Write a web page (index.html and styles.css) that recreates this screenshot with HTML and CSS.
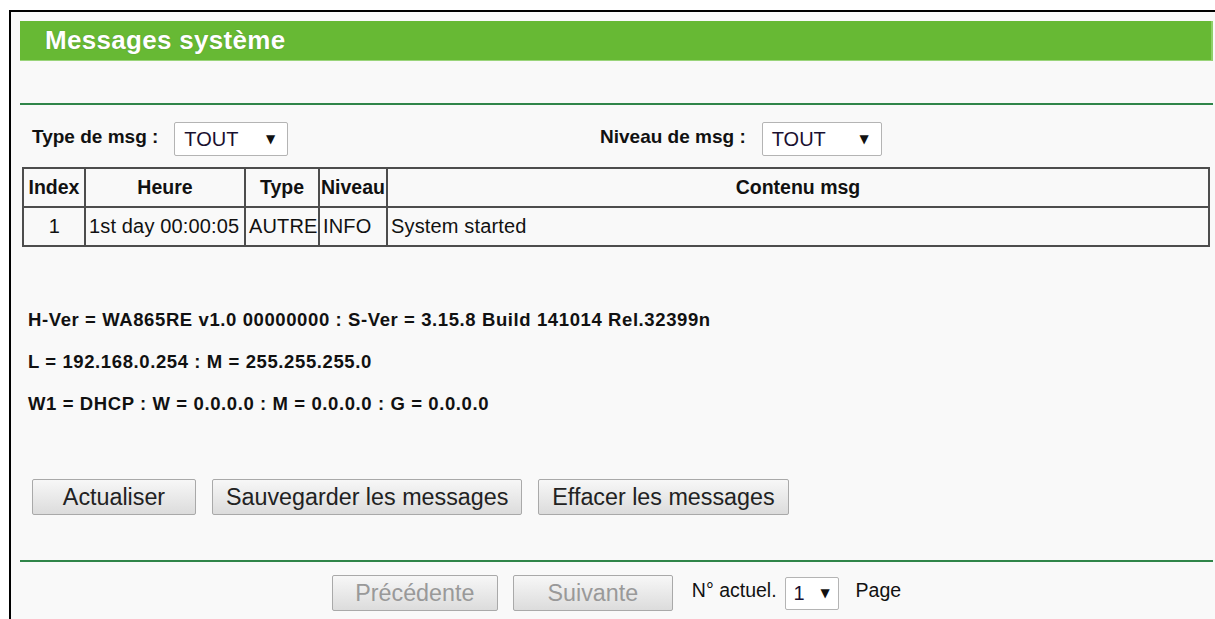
FILE: index.html
```html
<!DOCTYPE html>
<html lang="fr">
<head>
<meta charset="utf-8">
<title>Messages système</title>
<link rel="stylesheet" href="styles.css">
</head>
<body>
<div class="frame">
  <div class="title-bar">Messages système</div>
  <div class="rule rule-top"></div>

  <div class="filters">
    <div class="filter">
      <span class="filter-label">Type de msg :</span>
      <div class="select select-type"><span>TOUT</span><span class="arrow">▼</span></div>
    </div>
    <div class="filter">
      <span class="filter-label">Niveau de msg :</span>
      <div class="select select-level"><span>TOUT</span><span class="arrow">▼</span></div>
    </div>
  </div>

  <table class="log">
    <colgroup>
      <col class="c-index"><col class="c-time"><col class="c-type"><col class="c-level"><col>
    </colgroup>
    <thead>
      <tr><th>Index</th><th>Heure</th><th>Type</th><th>Niveau</th><th>Contenu msg</th></tr>
    </thead>
    <tbody>
      <tr><td class="center">1</td><td>1st day 00:00:05</td><td>AUTRE</td><td>INFO</td><td>System started</td></tr>
    </tbody>
  </table>

  <div class="info">
    <p>H-Ver = WA865RE v1.0 00000000 : S-Ver = 3.15.8 Build 141014 Rel.32399n</p>
    <p>L = 192.168.0.254 : M = 255.255.255.0</p>
    <p>W1 = DHCP : W = 0.0.0.0 : M = 0.0.0.0 : G = 0.0.0.0</p>
  </div>

  <div class="actions">
    <button class="btn btn-refresh">Actualiser</button>
    <button class="btn">Sauvegarder les messages</button>
    <button class="btn">Effacer les messages</button>
  </div>

  <div class="rule rule-bottom"></div>

  <div class="pager">
    <button class="btn btn-prev" disabled>Précédente</button>
    <button class="btn btn-next" disabled>Suivante</button>
    <span class="pager-label">N° actuel.</span>
    <div class="select select-page"><span>1</span><span class="arrow">▼</span></div>
    <span class="pager-label">Page</span>
  </div>
</div>
</body>
</html>
```

FILE: styles.css
```css
html, body {
  margin: 0;
  padding: 0;
  background: #ffffff;
}

body {
  font-family: "Liberation Sans", Arial, sans-serif;
  color: #111;
  height: 619px;
  overflow: hidden;
}

.frame {
  margin: 10px 0 0 9px;
  border-top: 2px solid #000;
  border-left: 2px solid #000;
  background: #f9f9f9;
  padding: 9px 2px 0 9px;
  height: 620px;
}

/* page heading */
.title-bar {
  height: 40px;
  background: #67b934;
  border-right: 2px solid #8fd06a;
  border-bottom: 1px solid #9ad47a;
  box-sizing: border-box;
  padding-left: 25px;
  color: #fff;
  font-weight: bold;
  font-size: 26px;
  letter-spacing: 0.3px;
  line-height: 38px;
  text-shadow: 0 0 1px rgba(60, 90, 30, 0.5);
}

.rule {
  height: 2px;
  background: #2f8549;
}

.rule-top {
  margin-top: 42px;
}

/* message filters */
.filters {
  display: grid;
  grid-template-columns: 568px 1fr;
  padding-left: 12px;
  margin-top: 17px;
  height: 34px;
}

.filter {
  display: flex;
  align-items: center;
  gap: 16px;
}

.filter-label {
  font-weight: bold;
  font-size: 19px;
  margin-top: -4px;
}

.select {
  box-sizing: border-box;
  height: 34px;
  display: inline-flex;
  align-items: center;
  justify-content: space-between;
  background: #fff;
  border: 1px solid #b4b4b4;
  border-radius: 2px;
  padding: 0 12px 0 9px;
  font-size: 20px;
  color: #1a1030;
}

.select-type { width: 114px; }
.select-level { width: 120px; }

.arrow {
  font-family: "DejaVu Sans", sans-serif;
  font-size: 12px;
  color: #111;
}

/* log table */
.log {
  margin: 11px 0 0 2px;
  width: 1188px;
  border-collapse: collapse;
  table-layout: fixed;
  font-size: 20px;
  letter-spacing: 0.15px;
  border: 2px solid #4d4d4d;
}

.c-index { width: 62px; }
.c-time { width: 160px; }
.c-type { width: 74px; }
.c-level { width: 68px; }

.log th,
.log td {
  border: 2px solid #4d4d4d;
  padding: 0 3px;
  white-space: nowrap;
  overflow: hidden;
}

.log th {
  height: 37px;
  font-weight: bold;
  text-align: center;
  font-size: 19.5px;
  letter-spacing: 0;
}

.log th:first-child,
.log th:nth-child(4) {
  padding: 0 1px;
}

.log td {
  height: 37px;
  padding: 0 2px 0 3px;
}

.log td.center {
  text-align: center;
}

/* firmware and address info */
.info {
  margin-top: 52px;
  padding-left: 8px;
}

.info p {
  margin: 0;
  height: 42px;
  line-height: 42px;
  font-weight: bold;
  font-size: 18.5px;
  letter-spacing: 0.6px;
}

/* action buttons */
.btn {
  box-sizing: border-box;
  height: 36px;
  padding: 0 13px;
  font-family: "Liberation Sans", Arial, sans-serif;
  font-size: 23.3px;
  color: #222;
  background: linear-gradient(#f7f7f7, #dcdcdc);
  border: 1px solid #a9a9a9;
  border-radius: 2px;
}

.btn:disabled {
  color: #999;
}

.actions {
  display: flex;
  gap: 16px;
  margin-top: 54px;
  padding-left: 12px;
}

.btn-refresh {
  width: 164px;
}

.rule-bottom {
  margin-top: 45px;
}

/* paging */
.pager {
  display: flex;
  justify-content: center;
  align-items: center;
  margin-top: 13px;
  height: 36px;
}

.btn-prev {
  width: 166px;
  margin-right: 15px;
}

.btn-next {
  width: 160px;
  margin-right: 19px;
}

.pager-label {
  font-size: 19.5px;
  margin-top: -6px;
}

.select-page {
  width: 54px;
  height: 33px;
  margin: 0 17px 0 8px;
  padding: 0 8px 0 8px;
}
```
